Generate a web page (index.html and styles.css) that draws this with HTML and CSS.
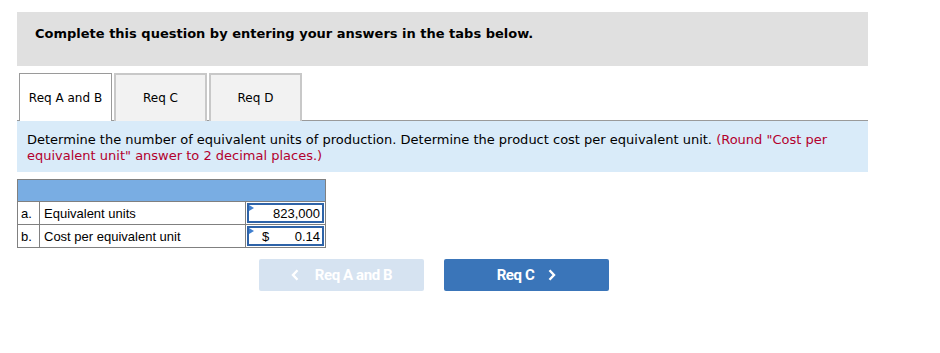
FILE: index.html
```html
<!DOCTYPE html>
<html>
<head>
<meta charset="utf-8">
<link rel="stylesheet" href="styles.css">
</head>
<body>
<div class="page">
  <div class="header">Complete this question by entering your answers in the tabs below.</div>
  <div class="tabs">
    <div class="tab active">Req A and B</div>
    <div class="tab">Req C</div>
    <div class="tab">Req D</div>
  </div>
  <div class="instructions">Determine the number of equivalent units of production. Determine the product cost per equivalent unit. <span class="note">(Round "Cost per equivalent unit" answer to 2 decimal places.)</span></div>
  <table class="grid">
    <tr class="head"><td colspan="3"></td></tr>
    <tr>
      <td class="letter">a.</td>
      <td class="label">Equivalent units</td>
      <td class="cell"><div class="input"><span class="val">823,000</span></div></td>
    </tr>
    <tr>
      <td class="letter">b.</td>
      <td class="label">Cost per equivalent unit</td>
      <td class="cell"><div class="input"><span class="cur">$</span><span class="val">0.14</span></div></td>
    </tr>
  </table>
  <div class="nav">
    <div class="btn prev"><svg class="chev left" width="8" height="12" viewBox="0 0 8 12"><path d="M6.5 1.2 L2 6 L6.5 10.8" fill="none" stroke="#fff" stroke-width="2.4"/></svg>Req A and B</div>
    <div class="btn next">Req C<svg class="chev right" width="8" height="12" viewBox="0 0 8 12"><path d="M1.5 1.2 L6 6 L1.5 10.8" fill="none" stroke="#fff" stroke-width="2.4"/></svg></div>
  </div>
</div>
</body>
</html>
```
FILE: styles.css
```css
body {
  margin: 0;
  background: #fff;
  font-family: "DejaVu Sans", Verdana, sans-serif;
  color: #000;
}
.page {
  padding: 12px 0 0 17px;
  width: 851px;
}
.header {
  background: #e0e0e0;
  height: 54px;
  box-sizing: border-box;
  padding: 14px 0 0 18px;
  font-size: 13px;
  font-weight: bold;
  line-height: 16px;
}
.tabs {
  display: flex;
  gap: 2px;
  margin-top: 7px;
  padding-left: 2px;
  border-bottom: 1px solid #9a9a9a;
  height: 47px;
}
.tab {
  width: 93px;
  height: 48px;
  box-sizing: border-box;
  border: 2px solid #c8c8c8;
  border-bottom: none;
  background: #f2f2f2;
  font-size: 12px;
  display: flex;
  align-items: center;
  justify-content: center;
}
.tab.active {
  background: #fff;
  border-color: #9a9a9a;
  border-width: 1px;
  border-bottom: none;
  position: relative;
  z-index: 1;
}
.instructions {
  background: #d9ebf9;
  padding: 11px 10px 8px 10px;
  font-size: 13px;
  line-height: 16px;
  color: #000;
}
.note {
  color: #b3002d;
}
.grid {
  margin-top: 7px;
  border-collapse: collapse;
  width: 309px;
  font-family: "Liberation Sans", Arial, sans-serif;
  font-size: 13px;
}
.grid td {
  border: 1px solid #808080;
  padding: 0;
  height: 21px;
  line-height: 15px;
}
.grid .head td {
  background: #79ade3;
}
.letter {
  width: 22px;
  padding-left: 3px !important;
  box-sizing: border-box;
}
.label {
  padding-left: 4px !important;
}
.cell {
  width: 77px;
  padding: 1px 1px 0 1px !important;
  vertical-align: top;
}
.input {
  position: relative;
  height: 20px;
  box-sizing: border-box;
  border: 1px solid #2e63a8;
  box-shadow: inset 0 0 0 1px #2e63a8;
  display: flex;
  align-items: center;
  justify-content: flex-end;
  padding: 0 3px 0 4px;
}
.input::before {
  content: "";
  position: absolute;
  left: 1px;
  top: 1px;
  border-left: 5px solid #3f7fcf;
  border-top: 3px solid transparent;
  border-bottom: 3px solid transparent;
}
.cur {
  margin-right: auto;
  padding-left: 10px;
}
.nav {
  display: flex;
  gap: 20px;
  margin: 11px 0 0 242px;
}
.btn {
  width: 165px;
  height: 32px;
  border-radius: 2px;
  display: flex;
  align-items: center;
  justify-content: center;
  font-family: Roboto, "Liberation Sans", sans-serif;
  font-weight: bold;
  font-size: 15px;
  color: #fff;
  letter-spacing: -0.4px;
}
.prev {
  background: #d6e3f1;
}
.next {
  background: #3a75b9;
}
.chev.left { margin-right: 16px; }
.chev.right { margin-left: 14px; }
```
